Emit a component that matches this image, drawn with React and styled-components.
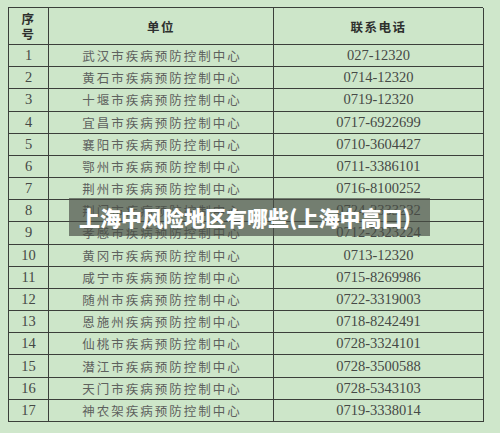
import React from "react"
import styled, { createGlobalStyle } from "styled-components"

const GlobalStyle = createGlobalStyle`
  html, body {
    margin: 0;
    padding: 0;
    background: #cfe7cb;
  }
`

const rows = [
  ["1", "武汉市疾病预防控制中心", "027-12320"],
  ["2", "黄石市疾病预防控制中心", "0714-12320"],
  ["3", "十堰市疾病预防控制中心", "0719-12320"],
  ["4", "宜昌市疾病预防控制中心", "0717-6922699"],
  ["5", "襄阳市疾病预防控制中心", "0710-3604427"],
  ["6", "鄂州市疾病预防控制中心", "0711-3386101"],
  ["7", "荆州市疾病预防控制中心", "0716-8100252"],
  ["8", "荆门市疾病预防控制中心", "0724-2333232"],
  ["9", "孝感市疾病预防控制中心", "0712-2323224"],
  ["10", "黄冈市疾病预防控制中心", "0713-12320"],
  ["11", "咸宁市疾病预防控制中心", "0715-8269986"],
  ["12", "随州市疾病预防控制中心", "0722-3319003"],
  ["13", "恩施州疾病预防控制中心", "0718-8242491"],
  ["14", "仙桃市疾病预防控制中心", "0728-3324101"],
  ["15", "潜江市疾病预防控制中心", "0728-3500588"],
  ["16", "天门市疾病预防控制中心", "0728-5343103"],
  ["17", "神农架疾病预防控制中心", "0719-3338014"],
]

const App = () => (
  <Page>
    <GlobalStyle />
    <Table>
      <HeadCell>序<br />号</HeadCell>
      <HeadCell>单位</HeadCell>
      <HeadCell>联系电话</HeadCell>
      {rows.map(([no, unit, phone]) => (
        <React.Fragment key={no}>
          <NumCell>{no}</NumCell>
          <UnitCell>{unit}</UnitCell>
          <NumCell>{phone}</NumCell>
        </React.Fragment>
      ))}
    </Table>
    <Banner>上海中风险地区有哪些(上海中高口)</Banner>
  </Page>
)

export default App

const Page = styled.div`
  position: relative;
  width: 500px;
  height: 433px;
  padding: 7px 17px 0 8px;
  box-sizing: border-box;
  background: #cfe7cb;
`

const Table = styled.div`
  display: grid;
  grid-template-columns: 40px 225px 210px;
  grid-template-rows: 37px repeat(17, 1fr);
  height: 415px;
  box-sizing: border-box;
  border-top: 1.5px solid #3b3f3a;
  border-left: 1.5px solid #3b3f3a;
  background: #cde6c9;
`

const Cell = styled.div`
  display: flex;
  align-items: center;
  justify-content: center;
  border-right: 1px solid #3b3f3a;
  border-bottom: 1px solid #3b3f3a;
  color: #454845;
  overflow: hidden;
  white-space: nowrap;

  &:nth-child(3n) {
    border-right-width: 1.5px;
  }
  &:nth-last-child(-n + 3) {
    border-bottom-width: 1.5px;
  }
`

const HeadCell = styled(Cell)`
  font-family: "Noto Sans CJK SC", sans-serif;
  font-weight: 700;
  font-size: 12.5px;
  line-height: 15px;
  color: #2e302e;
  text-align: center;
  letter-spacing: 1.5px;
`

const NumCell = styled(Cell)`
  font-family: "Liberation Serif", serif;
  font-size: 14.5px;
  color: #464946;
`

const UnitCell = styled(Cell)`
  font-family: "Noto Sans CJK SC", sans-serif;
  font-size: 12.5px;
  letter-spacing: 2px;
  color: #5e615e;
  padding-left: 2px;
`

const Banner = styled.div`
  position: absolute;
  left: 69px;
  top: 198px;
  width: 361px;
  height: 38px;
  display: flex;
  align-items: center;
  padding-left: 10px;
  box-sizing: border-box;
  background: rgba(72, 76, 70, 0.68);
  color: #ffffff;
  font-family: "Noto Sans CJK SC", sans-serif;
  font-weight: 900;
  font-size: 21px;
  white-space: nowrap;
`
